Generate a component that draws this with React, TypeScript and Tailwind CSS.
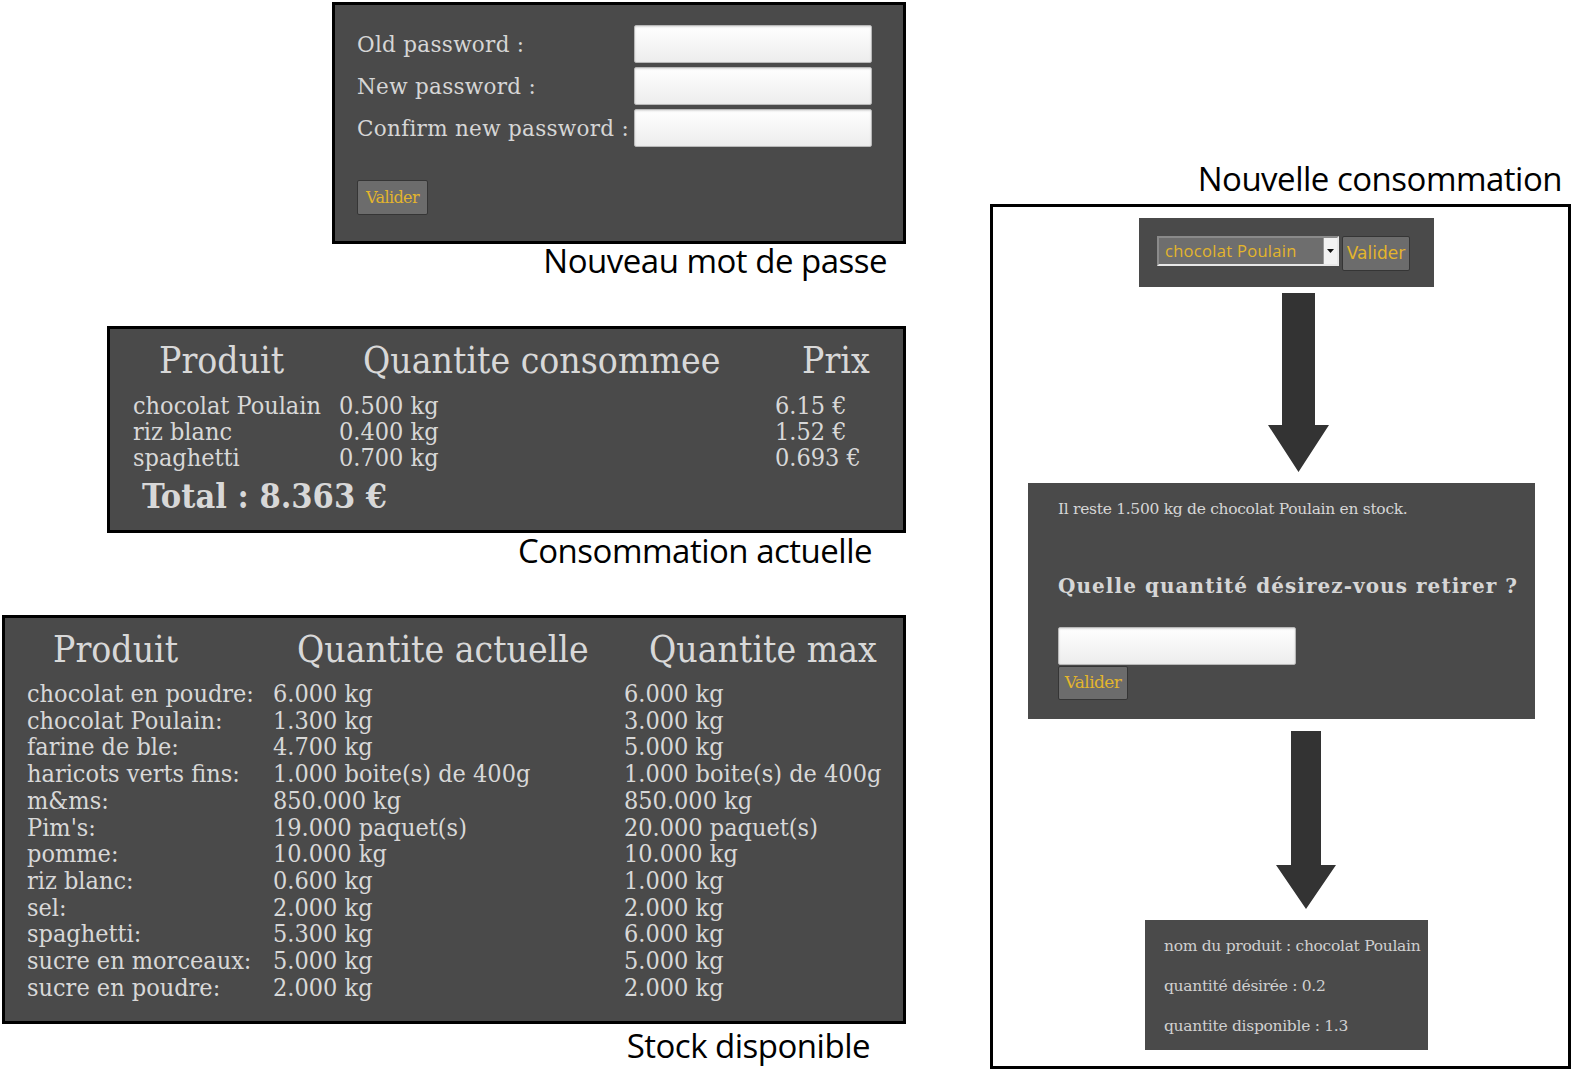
const serif = "font-['DejaVu_Serif_Condensed','DejaVu_Serif',serif]"
const caption = "font-['Open_Sans','Noto_Sans',sans-serif] text-[33px] tracking-[-0.5px] text-black text-right"

const consommation = [
  ['chocolat Poulain', '0.500 kg', '6.15 €'],
  ['riz blanc', '0.400 kg', '1.52 €'],
  ['spaghetti', '0.700 kg', '0.693 €'],
]

const stock = [
  ['chocolat en poudre:', '6.000 kg', '6.000 kg'],
  ['chocolat Poulain:', '1.300 kg', '3.000 kg'],
  ['farine de ble:', '4.700 kg', '5.000 kg'],
  ['haricots verts fins:', '1.000 boite(s) de 400g', '1.000 boite(s) de 400g'],
  ['m&ms:', '850.000 kg', '850.000 kg'],
  ["Pim's:", '19.000 paquet(s)', '20.000 paquet(s)'],
  ['pomme:', '10.000 kg', '10.000 kg'],
  ['riz blanc:', '0.600 kg', '1.000 kg'],
  ['sel:', '2.000 kg', '2.000 kg'],
  ['spaghetti:', '5.300 kg', '6.000 kg'],
  ['sucre en morceaux:', '5.000 kg', '5.000 kg'],
  ['sucre en poudre:', '2.000 kg', '2.000 kg'],
]

function TextInput({ className = '' }: { className?: string }) {
  return (
    <div
      className={`h-[38px] w-[238px] rounded-[2px] border border-[#b8b8b8] bg-gradient-to-b from-[#ffffff] to-[#ededed] shadow-[inset_0_1px_2px_rgba(0,0,0,0.15)] ${className}`}
    />
  )
}

function ValiderButton({ className = '', sans = false }: { className?: string; sans?: boolean }) {
  return (
    <button
      type="button"
      className={`flex items-center justify-center rounded-[2px] border border-[#353535] bg-[#6c6c6c] text-[#e3b52c] ${
        sans ? "font-['DejaVu_Sans',sans-serif] text-[17px]" : "font-['DejaVu_Serif',serif] text-[16px] tracking-[-0.6px]"
      } ${className}`}
    >
      Valider
    </button>
  )
}

function DownArrow({ w, h, shaft, headY }: { w: number; h: number; shaft: number; headY: number }) {
  const l = (w - shaft) / 2
  const r = l + shaft
  return (
    <svg width={w} height={h} viewBox={`0 0 ${w} ${h}`} className="block">
      <polygon points={`${l},0 ${r},0 ${r},${headY} ${w},${headY} ${w / 2},${h} 0,${headY} ${l},${headY}`} fill="#333333" />
    </svg>
  )
}

export default function App() {
  return (
    <div className="flex h-[1077px] w-[1587px] overflow-hidden bg-white">
      {/* left column */}
      <div className="flex w-[906px] flex-col">
        <div className="mt-[2px] ml-[332px] h-[242px] w-[574px] border-[3px] border-black bg-[#4a4a4a] pt-[20px] pl-[22px] font-['DejaVu_Serif',serif] text-[21.5px] text-[#d6d6d6]">
          <div className="grid grid-cols-[277px_238px] gap-y-[4px]">
            {['Old password :', 'New password :', 'Confirm new password :'].map((label) => (
              <div key={label} className="contents">
                <div className="flex h-[38px] items-center pt-[3px] tracking-[0.3px] whitespace-nowrap">{label}</div>
                <TextInput />
              </div>
            ))}
          </div>
          <ValiderButton className="mt-[33px] h-[35px] w-[71px]" />
        </div>
        <div className={`${caption} pr-[19px] leading-[34px]`}>Nouveau mot de passe</div>

        <div className={`mt-[48px] ml-[107px] h-[207px] w-[799px] border-[3px] border-black bg-[#4a4a4a] pt-[12px] text-[#d8d8d8] ${serif}`}>
          <div className="grid grid-cols-[204px_439px_auto] pl-[49px] text-[37px] leading-[40px]">
            <div>Produit</div>
            <div>Quantite consommee</div>
            <div>Prix</div>
          </div>
          <div className="mt-[12px] grid grid-cols-[206px_436px_auto] pl-[23px] text-[25px] leading-[26px]">
            {consommation.map((row) => row.map((cell, i) => <div key={row[0] + i}>{cell}</div>))}
          </div>
          <div className="mt-[7px] pl-[32px] text-[34px] leading-[36px] font-semibold">Total : 8.363 €</div>
        </div>
        <div className={`${caption} pr-[34px] leading-[36px]`}>Consommation actuelle</div>

        <div className={`mt-[46px] ml-[2px] h-[409px] w-[904px] border-[3px] border-black bg-[#4a4a4a] pt-[12px] text-[#d8d8d8] ${serif}`}>
          <div className="grid grid-cols-[244px_352px_auto] pl-[48px] text-[37px] leading-[40px]">
            <div>Produit</div>
            <div>Quantite actuelle</div>
            <div>Quantite max</div>
          </div>
          <div className="mt-[11px] grid grid-cols-[246px_351px_auto] pl-[22px] text-[25px] leading-[26.7px]">
            {stock.map((row) => row.map((cell, i) => <div key={row[0] + i}>{cell}</div>))}
          </div>
        </div>
        <div className={`${caption} pr-[36px] leading-[44px]`}>Stock disponible</div>
      </div>

      {/* right column */}
      <div className="ml-[84px] flex w-[581px] flex-col">
        <div className={`${caption} mt-[156px] h-[45px] pr-[9px] leading-[45px]`}>Nouvelle consommation</div>
        <div className="mt-[3px] flex h-[865px] w-[581px] flex-col border-[3px] border-black">
          <div className="mt-[11px] ml-[146px] flex h-[69px] w-[295px] items-start gap-[3px] bg-[#4a4a4a] pt-[18px] pl-[18px]">
            <div className="flex h-[30px] w-[182px] items-center border-2 border-t-[#8a8a8a] border-l-[#8a8a8a] border-r-[#e8e8e8] border-b-[#e8e8e8] bg-[#6e6e6e]">
              <span className="flex-1 pl-[6px] font-['Open_Sans',sans-serif] text-[16.5px] tracking-[0.3px] text-[#e3b52c]">chocolat Poulain</span>
              <span className="flex h-full w-[14px] items-center justify-center border-l border-[#999] bg-[#f2f2f2]">
                <svg width="7" height="4" viewBox="0 0 7 4">
                  <polygon points="0,0 7,0 3.5,4" fill="#111" />
                </svg>
              </span>
            </div>
            <ValiderButton sans className="h-[35px] w-[68px]" />
          </div>

          <div className="mt-[6px] ml-[275px]">
            <DownArrow w={61} h={179} shaft={33} headY={132} />
          </div>

          <div className="mt-[11px] ml-[35px] h-[236px] w-[507px] bg-[#4a4a4a] pt-[16px] pl-[30px] font-['DejaVu_Serif',serif] text-[#d6d6d6]">
            <div className="text-[15.5px] leading-[20px] tracking-[-0.3px]">Il reste 1.500 kg de chocolat Poulain en stock.</div>
            <div className="mt-[54px] text-[20px] leading-[26px] font-bold tracking-[1.05px] whitespace-nowrap">Quelle quantité désirez-vous retirer ?</div>
            <TextInput className="mt-[28px]" />
            <ValiderButton className="mt-[1px] h-[34px] w-[70px] text-[17px]" />
          </div>

          <div className="mt-[12px] ml-[283px]">
            <DownArrow w={60} h={178} shaft={30} headY={134} />
          </div>

          <div className="mt-[11px] ml-[152px] h-[130px] w-[283px] bg-[#4a4a4a] pt-[6px] pl-[19px] font-['DejaVu_Serif',serif] text-[15.5px] leading-[40px] tracking-[-0.3px] text-[#d0d0d0]">
            <div className="whitespace-nowrap">nom du produit : chocolat Poulain</div>
            <div>quantité désirée : 0.2</div>
            <div>quantite disponible : 1.3</div>
          </div>
        </div>
      </div>
    </div>
  )
}
